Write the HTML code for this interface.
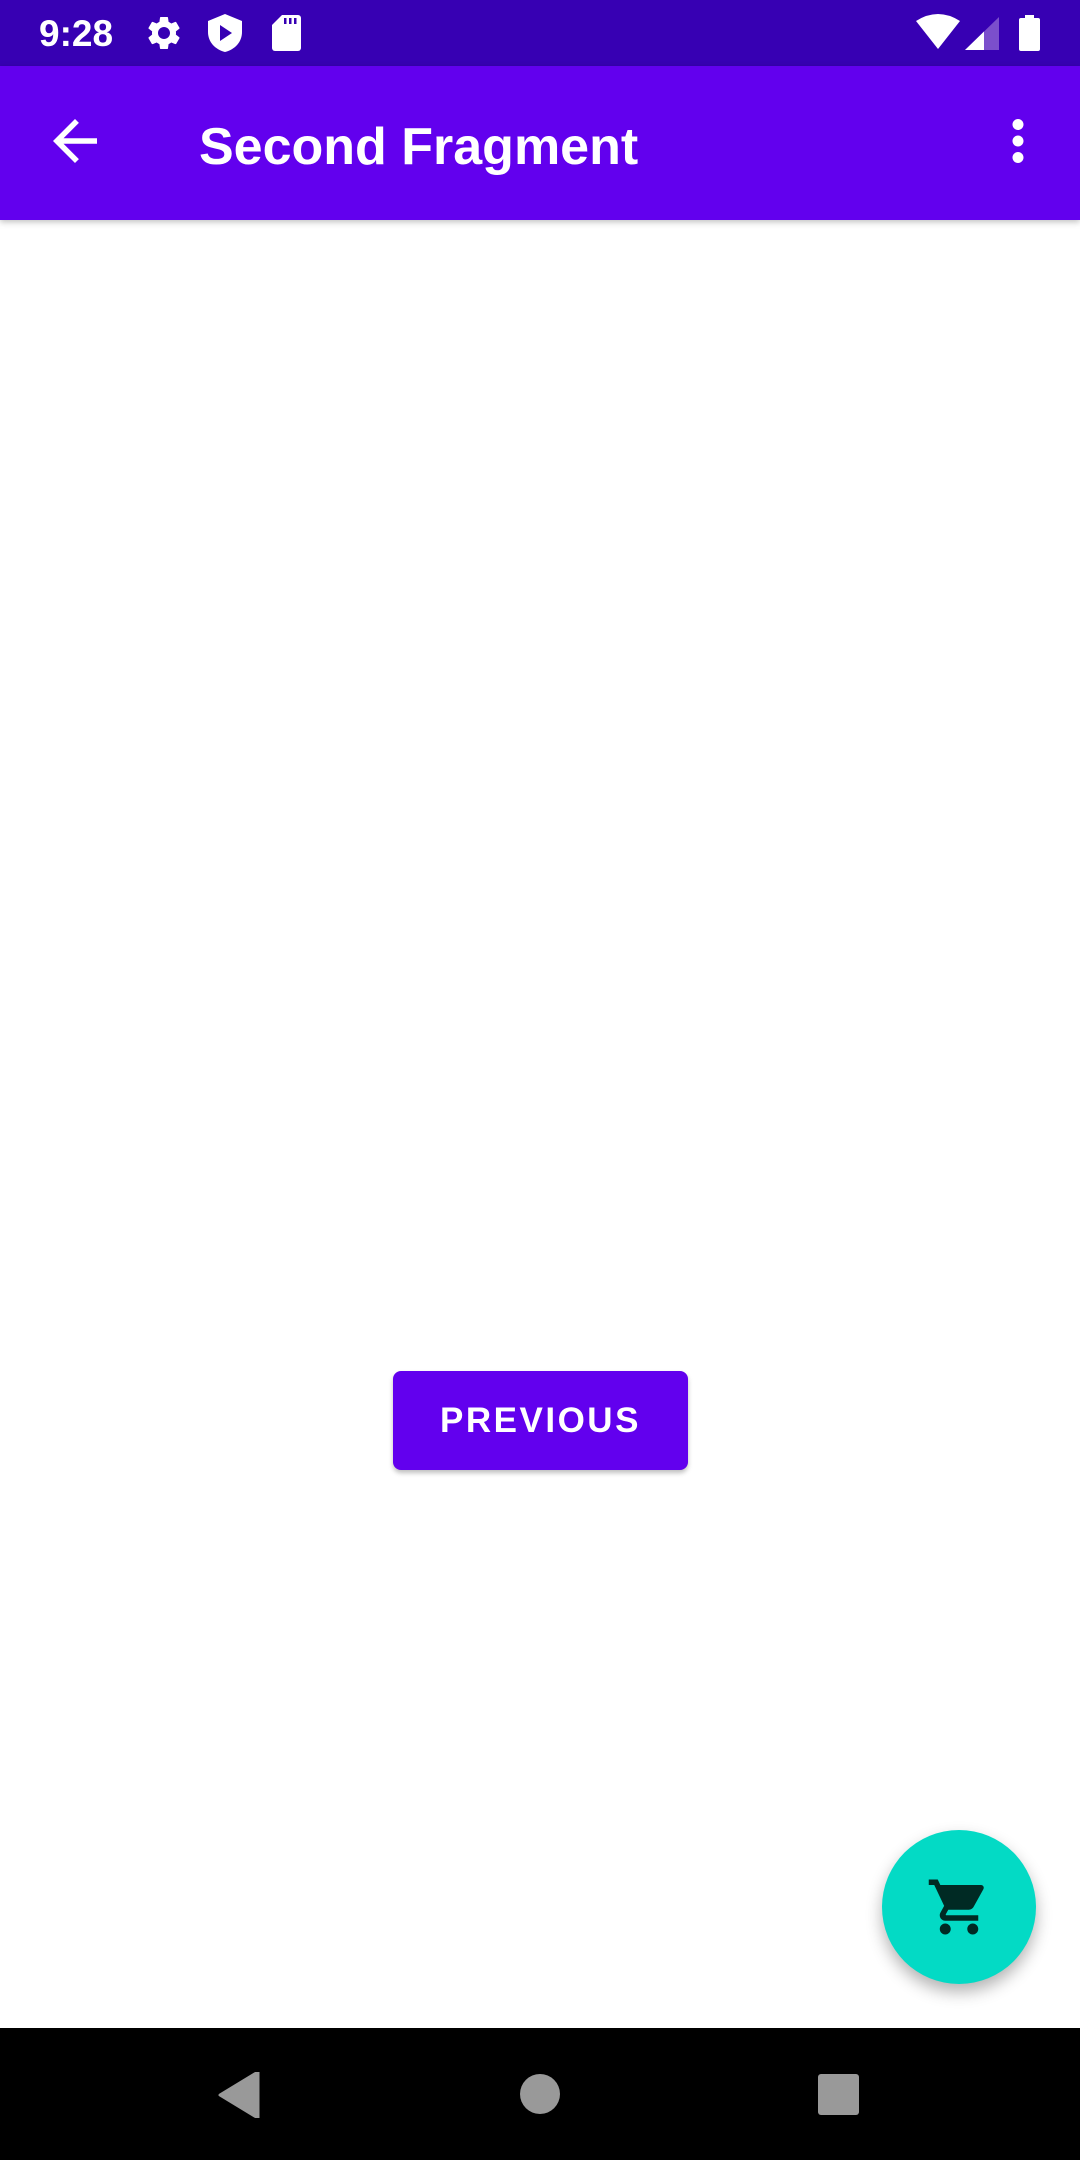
<!DOCTYPE html>
<html><head><meta charset="utf-8"><style>
html,body{margin:0;padding:0;width:1080px;height:2160px;overflow:hidden;background:#fff;font-family:"Liberation Sans",sans-serif}
.sb{position:absolute;left:0;top:0;width:1080px;height:66px;background:#3700B3}
.ab{position:absolute;left:0;top:66px;width:1080px;height:154px;background:#6200EE;box-shadow:0 2px 6px rgba(0,0,0,.25)}
.t{position:absolute;color:#fff;white-space:nowrap}
.btn{position:absolute;left:393px;top:1371px;width:295px;height:99px;background:#6200EE;border-radius:8px;box-shadow:0 3px 5px rgba(0,0,0,.25);color:#fff;font-size:35px;font-weight:bold;letter-spacing:2.5px;text-align:center;line-height:99px}
.fab{position:absolute;left:882px;top:1830px;width:154px;height:154px;border-radius:50%;background:#03DAC5;box-shadow:0 8px 16px rgba(0,0,0,.3)}
.nav{position:absolute;left:0;top:2028px;width:1080px;height:132px;background:#000}
</style></head><body>
<div class="sb">
<div class="t" style="left:39px;top:12px;font-size:37px;font-weight:bold;line-height:44px">9:28</div>
<svg style="position:absolute;left:144px;top:13px" width="40" height="40" viewBox="0 0 24 24"><path fill="#fff" d="M19.14 12.94c.04-.3.06-.61.06-.94 0-.32-.02-.64-.07-.94l2.03-1.58a.49.49 0 0 0 .12-.61l-1.92-3.32a.488.488 0 0 0-.59-.22l-2.390.96c-.5-.38-1.03-.7-1.62-.94l-.36-2.54a.484.484 0 0 0-.48-.41h-3.84c-.24 0-.43.17-.47.41l-.36 2.54c-.59.24-1.130.57-1.62.94l-2.39-.96c-.22-.08-.47 0-.59.22L2.74 8.87c-.12.21-.08.47.12.61l2.03 1.58c-.05.3-.09.63-.09.94s.02.64.07.94l-2.03 1.58a.49.49 0 0 0-.12.61l1.92 3.32c.12.22.37.29.59.22l2.39-.96c.5.38 1.03.7 1.62.94l.36 2.54c.05.24.24.41.48.41h3.84c.24 0 .44-.17.47-.41l.36-2.54c.59-.24 1.13-.56 1.62-.94l2.39.96c.22.08.47 0 .59-.22l1.92-3.32c.12-.22.07-.47-.12-.61l-2.01-1.58zM12 15.6c-1.98 0-3.6-1.62-3.6-3.6s1.62-3.6 3.6-3.6 3.6 1.62 3.6 3.6-1.62 3.6-3.6 3.6z"/></svg>
<svg style="position:absolute;left:208px;top:14px" width="34" height="38" viewBox="0 0 17 19"><path fill="#fff" d="M8.5 0L0 3.5v5.5c0 5 3.6 8.8 8.5 10 4.9-1.2 8.5-5 8.5-10V3.5z"/><path fill="#3700B3" d="M6 5.5v8l6-4z"/></svg>
<svg style="position:absolute;left:272px;top:15px" width="29" height="36" viewBox="0 0 29 36"><path fill="#fff" d="M10 0h16a3 3 0 0 1 3 3v30a3 3 0 0 1-3 3H3a3 3 0 0 1-3-3V10z"/><rect x="12" y="3" width="2.5" height="6" fill="#3700B3"/><rect x="17" y="3" width="2.5" height="6" fill="#3700B3"/><rect x="22" y="3" width="2.5" height="6" fill="#3700B3"/></svg>
<svg style="position:absolute;left:916px;top:14px" width="44" height="36" viewBox="0 0 44 36"><path fill="#fff" d="M0 7Q22 -7 44 7L22 35z"/></svg>
<svg style="position:absolute;left:965px;top:17px" width="34" height="33" viewBox="0 0 34 33"><path fill="#7B4FCC" d="M34 0V33H0z"/><path fill="#fff" d="M19 14.5V33H0z"/></svg>
<svg style="position:absolute;left:1019px;top:15px" width="21" height="36" viewBox="0 0 21 36"><rect x="6" y="0" width="9" height="4" fill="#fff"/><rect x="0" y="3" width="21" height="33" rx="2" fill="#fff"/></svg>
</div>
<div class="ab">
<svg style="position:absolute;left:42px;top:42px" width="66" height="66" viewBox="0 0 24 24"><path fill="#fff" d="M20 11H7.83l5.59-5.59L12 4l-8 8 8 8 1.41-1.41L7.83 13H20v-2z"/></svg>
<div class="t" style="left:199px;top:51px;font-size:52px;font-weight:bold;line-height:60px">Second Fragment</div>
<svg style="position:absolute;left:985px;top:42px" width="66" height="66" viewBox="0 0 24 24"><path fill="#fff" d="M12 8c1.1 0 2-.9 2-2s-.9-2-2-2-2 .9-2 2 .9 2 2 2zm0 2c-1.1 0-2 .9-2 2s.9 2 2 2 2-.9 2-2-.9-2-2-2zm0 6c-1.1 0-2 .9-2 2s.9 2 2 2 2-.9 2-2-.9-2-2-2z"/></svg>
</div>
<div class="btn">PREVIOUS</div>
<div class="fab"><svg style="position:absolute;left:44px;top:44px" width="66" height="66" viewBox="0 0 24 24"><path fill="#002A24" d="M7 18c-1.1 0-1.99.9-1.99 2S5.9 22 7 22s2-.9 2-2-.9-2-2-2zM1 2v2h2l3.6 7.59-1.35 2.45c-.16.28-.25.61-.25.96 0 1.1.9 2 2 2h12v-2H7.42c-.14 0-.25-.11-.25-.25l.03-.12.9-1.63h7.45c.75 0 1.41-.41 1.75-1.03l3.58-6.49A1.003 1.003 0 0 0 20 4H5.21l-.94-2H1zm16 16c-1.1 0-1.99.9-1.99 2s.89 2 1.99 2 2-.9 2-2-.9-2-2-2z"/></svg></div>
<div class="nav">
<svg style="position:absolute;left:218px;top:44px" width="42" height="46" viewBox="0 0 42 46"><path fill="#999" d="M40 0V46L2 23z" stroke="#999" stroke-width="3" stroke-linejoin="round"/></svg>
<div style="position:absolute;left:520px;top:46px;width:40px;height:40px;border-radius:50%;background:#999"></div>
<div style="position:absolute;left:818px;top:46px;width:41px;height:41px;border-radius:3px;background:#999"></div>
</div>
</body></html>
